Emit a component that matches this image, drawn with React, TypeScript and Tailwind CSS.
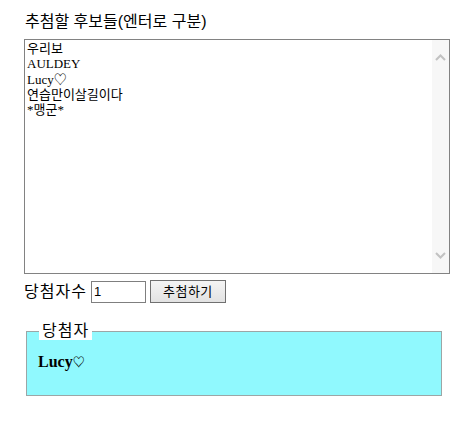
import React, { useState } from 'react';

const KR = { fontFamily: '"Liberation Sans", "Noto Sans CJK KR", sans-serif' };
const MIX = { fontFamily: '"Liberation Serif", "Noto Sans CJK KR", serif' };

const candidates = ['우리보', 'AULDEY', 'Lucy♡', '연습만이살길이다', '*맹군*'];

export default function App() {
  const [text, setText] = useState(candidates.join('\n'));
  const [count, setCount] = useState('1');
  const [winners, setWinners] = useState<string[]>(['Lucy♡']);

  const draw = () => {
    const list = text.split('\n').map(s => s.trim()).filter(Boolean);
    const n = Math.max(1, parseInt(count, 10) || 1);
    const shuffled = [...list].sort(() => Math.random() - 0.5);
    setWinners(shuffled.slice(0, n));
  };

  // 하트는 원본처럼 작게
  const renderName = (name: string) =>
    name.split('♡').map((part, i, arr) => (
      <React.Fragment key={i}>
        {part}
        {i < arr.length - 1 && <span className="text-[12px]">♡</span>}
      </React.Fragment>
    ));

  return (
    <div className="min-h-screen bg-white pl-[24px] pt-[12px] text-black" style={KR}>
      <div className="text-[16px] leading-[20px] pl-[1px]">추첨할 후보들(엔터로 구분)</div>

      <div className="mt-[7px] flex h-[235px] w-[426px] border border-[#828282] bg-white">
        <textarea
          value={text}
          onChange={e => setText(e.target.value)}
          className="flex-1 resize-none overflow-hidden border-0 bg-white pl-[2px] pt-[1px] text-[13px] leading-[15.3px] text-black outline-none"
          style={MIX}
          spellCheck={false}
        />
        <div className="flex w-[17px] flex-col items-center justify-between bg-[#f7f7f7] py-[14px]">
          <svg width="11" height="7" viewBox="0 0 11 7">
            <path d="M1 6 L5.5 1.5 L10 6" fill="none" stroke="#c2c2c2" strokeWidth="2" />
          </svg>
          <svg width="11" height="7" viewBox="0 0 11 7">
            <path d="M1 1 L5.5 5.5 L10 1" fill="none" stroke="#c2c2c2" strokeWidth="2" />
          </svg>
        </div>
      </div>

      <div className="mt-[6px] flex items-center">
        <span className="text-[16px] leading-[20px] tracking-[1px]">당첨자수</span>
        <input
          value={count}
          onChange={e => setCount(e.target.value)}
          className="ml-[4px] h-[22px] w-[55px] border border-[#7f7f7f] bg-white px-[2px] text-[13px] text-black outline-none"
          style={{ fontFamily: '"Liberation Sans", Arial, sans-serif' }}
        />
        <button
          onClick={draw}
          className="ml-[4px] h-[23px] w-[76px] border border-[#707070] bg-gradient-to-b from-[#f4f4f4] to-[#e2e2e2] text-[13px] leading-[20px] tracking-[0.5px] text-black"
        >
          추첨하기
        </button>
      </div>

      <fieldset className="ml-[2px] mt-[19px] w-[416px] border border-[#9ca6a6] bg-[#90f9fe] px-[11px] pb-[22px] pt-[12px]">
        <legend className="ml-[1px] bg-white px-[3px] text-[16px] leading-[18px] tracking-[1px]">당첨자</legend>
        {winners.map((w, i) => (
          <div key={i} className="text-[16px] font-bold leading-[20px]" style={MIX}>
            {renderName(w)}
          </div>
        ))}
      </fieldset>
    </div>
  );
}
